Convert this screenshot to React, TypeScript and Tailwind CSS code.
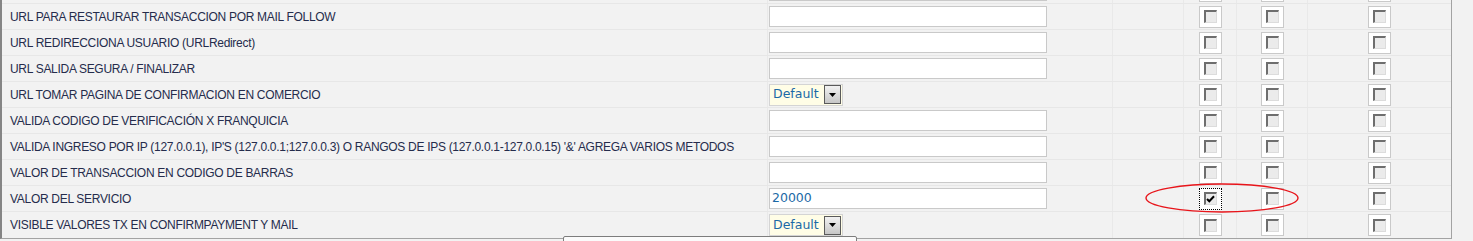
import React from "react";

type Field = "text" | "select" | "none";

type Row = {
  label: string;
  field: Field;
  value?: string;
  checked?: boolean;
};

// first row is scrolled mostly out of view
const rows: Row[] = [
  { label: "", field: "text" },
  { label: "URL PARA RESTAURAR TRANSACCION POR MAIL FOLLOW", field: "text" },
  { label: "URL REDIRECCIONA USUARIO (URLRedirect)", field: "text" },
  { label: "URL SALIDA SEGURA / FINALIZAR", field: "text" },
  { label: "URL TOMAR PAGINA DE CONFIRMACION EN COMERCIO", field: "select" },
  { label: "VALIDA CODIGO DE VERIFICACIÓN X FRANQUICIA", field: "text" },
  {
    label:
      "VALIDA INGRESO POR IP (127.0.0.1), IP'S (127.0.0.1;127.0.0.3) O RANGOS DE IPS (127.0.0.1-127.0.0.15) '&' AGREGA VARIOS METODOS",
    field: "text",
  },
  { label: "VALOR DE TRANSACCION EN CODIGO DE BARRAS", field: "text" },
  { label: "VALOR DEL SERVICIO", field: "text", value: "20000", checked: true },
  { label: "VISIBLE VALORES TX EN CONFIRMPAYMENT Y MAIL", field: "select" },
];

function CheckBox({ checked }: { checked?: boolean }) {
  return (
    <div
      className={
        checked
          ? "flex h-[22px] w-[23px] items-center justify-center border border-dotted border-black bg-white"
          : "flex h-[22px] w-[23px] items-center justify-center border border-[#c9c9c9] bg-white"
      }
    >
      <div className="flex h-[13px] w-[13px] items-center justify-center border-t-2 border-l-2 border-r border-b border-t-[#6e6e6e] border-l-[#6e6e6e] border-r-[#dcdcdc] border-b-[#dcdcdc] bg-[#ebebeb]">
        {checked && (
          <svg width="9" height="8" viewBox="0 0 9 8">
            <path d="M1 4 L3.3 6.3 L8 1.3" stroke="#000" strokeWidth="2" fill="none" />
          </svg>
        )}
      </div>
    </div>
  );
}

function SelectBox() {
  return (
    <div className="flex h-[22px] w-[74px] items-center border border-[#d4d4d4] bg-[#fffde6]">
      <span className="flex-1 pl-[3px] font-['DejaVu_Sans',Verdana,sans-serif] text-[12.5px] leading-none text-[#1b69a6]">
        Default
      </span>
      <div className="mr-px flex h-[19px] w-[17px] items-center justify-center border border-[#5a5a5a] bg-gradient-to-b from-[#f2f2f2] to-[#c6c6c6]">
        <svg width="7" height="4" viewBox="0 0 7 4">
          <path d="M0 0 L7 0 L3.5 4 Z" fill="#000" />
        </svg>
      </div>
    </div>
  );
}

function TextBox({ value }: { value?: string }) {
  return (
    <div className="flex h-[21px] w-[278px] items-center border border-[#c9c9c9] bg-white pl-[2px] font-['DejaVu_Sans',Verdana,sans-serif] text-[12.5px] text-[#1b69a6]">
      {value}
    </div>
  );
}

export default function App() {
  return (
    <div className="relative h-[241px] w-[1473px] overflow-hidden bg-[#f2f2f2]">
      <div className="-mt-[22px] w-[1452px] border-l-2 border-r border-b border-l-[#858585] border-r-[#a3a3a3] border-b-[#a3a3a3]">
        {rows.map((r, i) => (
          <div key={i} className="flex h-[26px] border-b border-[#e7e7e7] last:border-b-0">
            <div className="flex w-[765px] items-center overflow-hidden pl-[8px] font-['Liberation_Sans',Arial,sans-serif] text-[12px] tracking-[-0.3px] whitespace-nowrap text-[#252c4c]">
              {r.label}
            </div>
            <div className="flex w-[345px] items-center border-l border-[#e9e9e9] pl-[1px]">
              {r.field === "text" && <TextBox value={r.value} />}
              {r.field === "select" && <SelectBox />}
            </div>
            <div className="w-[71px] border-l border-[#e9e9e9]" />
            <div className="flex w-[53px] items-center justify-center border-l border-[#e9e9e9]">
              <CheckBox checked={r.checked} />
            </div>
            <div className="flex w-[71px] items-center justify-center border-l border-[#e9e9e9]">
              <CheckBox />
            </div>
            <div className="flex flex-1 items-center justify-center border-l border-[#e9e9e9]">
              <CheckBox />
            </div>
          </div>
        ))}
      </div>

      {/* annotation ellipse */}
      <svg className="pointer-events-none absolute left-[1144px] top-[182px]" width="158" height="32" viewBox="0 0 158 32">
        <ellipse cx="78" cy="16" rx="76" ry="14" stroke="#e8141a" strokeWidth="1.4" fill="none" />
      </svg>

      {/* tooltip, mostly below the fold */}
      <div className="absolute left-[563px] top-[236px] w-[294px] rounded-t-[2px] border border-[#7d7d7d] bg-[#fbfbfb] px-[14px] pt-[3px] font-['Liberation_Sans',Arial,sans-serif] text-[12px] text-[#2b2b2b]">
        Marca el Valor del servicio
      </div>
    </div>
  );
}
